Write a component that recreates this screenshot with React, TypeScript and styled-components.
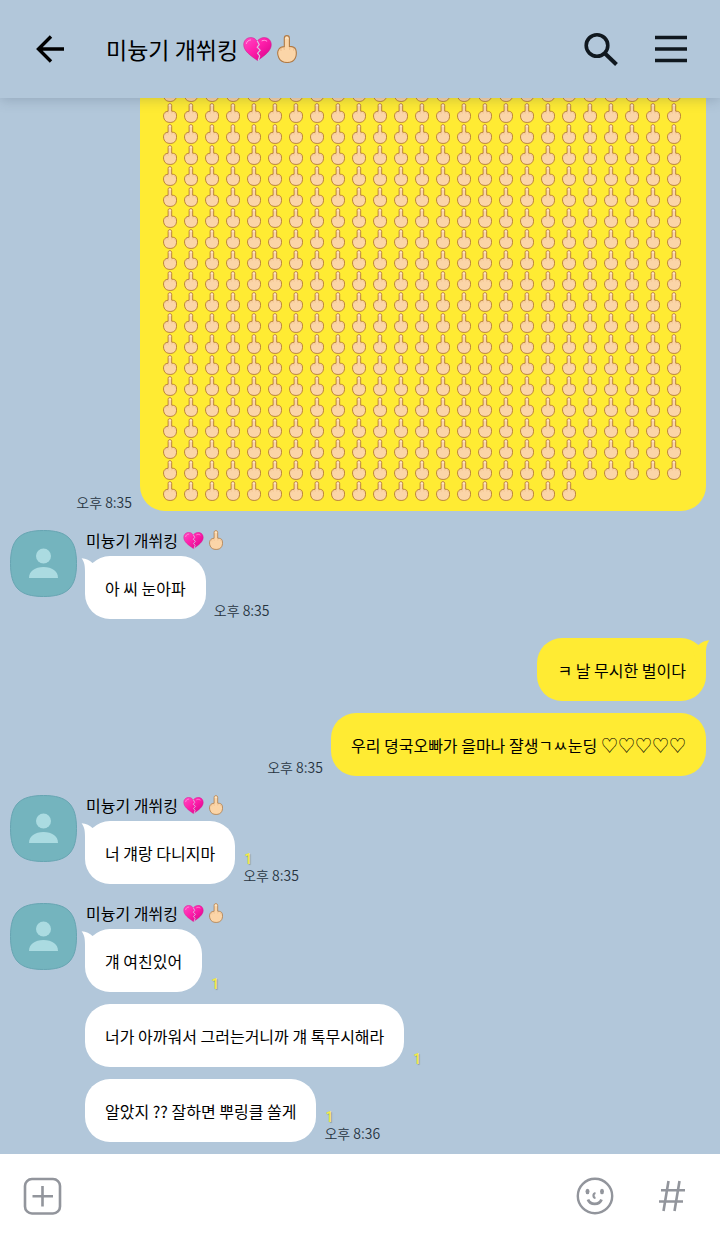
import React from "react";
import styled, { createGlobalStyle } from "styled-components";

const GlobalStyle = createGlobalStyle`
  * { box-sizing: border-box; }
  body {
    margin: 0;
    background: #b2c7da;
    color: #000;
    font-family: "Noto Sans CJK KR", "Noto Sans", sans-serif;
  }
  button {
    display: flex;
    padding: 0;
    border: 0;
    background: none;
    color: inherit;
    cursor: pointer;
  }
`;

const Screen = styled.div`
  display: flex;
  flex-direction: column;
  height: 100vh;
`;

const Header = styled.header`
  position: relative;
  z-index: 1;
  display: flex;
  flex: none;
  align-items: center;
  height: 98px;
  padding: 0 32px 0 36px;
  background: #b2c7da;
  box-shadow: 0 2px 12px rgba(40, 60, 80, 0.22);
`;

const Title = styled.h1`
  display: flex;
  flex: 1;
  align-items: center;
  gap: 5px;
  margin: 0 0 0 41px;
  font-size: 23px;
  font-weight: 400;
  line-height: 32px;
`;

const Tools = styled.div`
  display: flex;
  align-items: center;
  gap: 36px;
  color: #10181f;
`;

const Chat = styled.main`
  display: flex;
  flex: 1;
  flex-direction: column;
  justify-content: flex-end;
  gap: 19px;
  min-height: 0;
  padding: 0 14px 12px 10px;
  overflow: hidden;
`;

const Group = styled.section`
  display: flex;
  flex: none;
  gap: 8px;
`;

const Stack = styled.div<{ $mine?: boolean }>`
  display: flex;
  flex: 1;
  flex-direction: column;
  align-items: ${(p) => (p.$mine ? "flex-end" : "flex-start")};
  gap: 12px;
`;

const Sender = styled.div`
  display: flex;
  align-items: center;
  gap: 5px;
  height: 20px;
  margin-bottom: -6px;
  padding-left: 1px;
  font-size: 16px;
  line-height: 20px;
`;

const Row = styled.div<{ $mine?: boolean }>`
  display: flex;
  flex-direction: ${(p) => (p.$mine ? "row-reverse" : "row")};
  align-items: flex-end;
  gap: 8px;
`;

const Bubble = styled.div<{ $mine?: boolean }>`
  position: relative;
  max-width: 566px;
  padding: 21px 20px 19px;
  border-radius: 25px;
  background: ${(p) => (p.$mine ? "#ffeb33" : "#fff")};
  font-size: 16px;
  line-height: 23px;
`;

const HandBubble = styled(Bubble)`
  display: flex;
  flex-wrap: wrap;
  padding: 10px 20px 10px 19px;
`;

const HandCell = styled.span`
  display: flex;
  align-items: center;
  justify-content: center;
  width: 21px;
  height: 21px;
`;

const Hearts = styled.span`
  font-size: 17px;
  font-weight: 300;
  line-height: 17px;
`;

const Tail = styled.svg<{ $mine?: boolean }>`
  position: absolute;
  top: 1px;
  ${(p) => (p.$mine ? "right: -4px; transform: scaleX(-1);" : "left: -4px;")}
`;

const Meta = styled.div`
  display: flex;
  flex-direction: column;
  font-size: 14px;
  font-weight: 350;
  line-height: 17px;
  color: #27343f;
`;

const Unread = styled.span`
  padding-left: 1px;
  font-family: Roboto, sans-serif;
  font-weight: 500;
  line-height: 16px;
  color: #f6ea45;
  text-shadow: 1px 1px 1px rgba(90, 100, 70, 0.4);
`;

const Time = styled.time`
  line-height: 17px;
`;

const Composer = styled.form`
  display: flex;
  flex: none;
  align-items: center;
  height: 84px;
  padding: 0 34px 0 23px;
  background: #fff;
  color: #92959c;
`;

const MessageInput = styled.input`
  flex: 1;
  min-width: 0;
  height: 40px;
  margin: 0 16px;
  border: 0;
  outline: 0;
  background: transparent;
  font: inherit;
`;

const ComposerTools = styled.div`
  display: flex;
  align-items: center;
  gap: 44px;
`;

const Hand = ({ width, height, outline = "#b07a45" }: { width: number; height: number; outline?: string }) => (
  <svg width={width} height={height} viewBox="0 0 20 28" aria-hidden="true">
    <path
      d="M7.3 11.6V3.2C7.3 1.5 8.5.6 9.9.6s2.5.9 2.5 2.6v8.2c3.4.1 5.6.8 6.4 3.2.8 3 .7 6.1-.6 8.7-1.4 2.7-4.3 4.2-8 4.2-4.4 0-7.1-1.8-8.4-4.8C.4 19.7.4 16.4 1.8 14.3 3 12.4 5 11.6 7.3 11.6z"
      fill="#fbd5a8"
      stroke={outline}
      strokeWidth="1.1"
    />
    <path d="M8.8 4.2c0-2.6 2.2-2.6 2.2 0" fill="none" stroke="#fff0d8" strokeWidth="1" />
    <path
      d="M4.3 16c-.9-1-.4-2.3.6-2.9M7.5 12.5c-.5.8-.4 1.7 0 2.4M12.3 12.2c.6.8.6 1.7.2 2.4M16.2 13.2c.6.7.7 1.5.3 2.3"
      fill="none"
      stroke="#e6b07f"
      strokeWidth="0.7"
    />
  </svg>
);

const BrokenHeart = ({ width, height }: { width: number; height: number }) => (
  <svg width={width} height={height} viewBox="0 0 29 24" aria-hidden="true">
    <defs>
      <linearGradient id="pinkHeart" x1="0" y1="0" x2="1" y2="1">
        <stop offset="0" stopColor="#ff4cc4" />
        <stop offset="0.45" stopColor="#ff1fab" />
        <stop offset="1" stopColor="#d60087" />
      </linearGradient>
    </defs>
    <path
      d="M14 4.2C12.5 1.7 10.4.5 7.8.5 3.7.5.7 3.6.7 7.7c0 6 6.4 10.8 13.8 15.8 7.4-5 13.8-9.8 13.8-15.8 0-4.1-3-7.2-7.1-7.2-2.7 0-5 1.3-7.2 3.7z"
      fill="url(#pinkHeart)"
      stroke="#ca168c"
      strokeWidth="0.5"
    />
    <path
      d="M14.2 3.8l2 3.8-2 2.6 3 3-2.6 3 2.1 2.8-1.5 4.5"
      fill="none"
      stroke="#d3c8e2"
      strokeWidth="1.2"
    />
    <path
      d="M3.4 6.5c.5-2 2-3.3 4.1-3.5M19 3.8c1.6-.8 3.4-.7 4.8.3"
      fill="none"
      stroke="#ff9ee0"
      strokeWidth="1"
      strokeLinecap="round"
    />
  </svg>
);

const Avatar = () => (
  <svg width="67" height="67" viewBox="0 0 67 67" role="img" aria-label="프로필">
    <path
      d="M33.5.5C57.5.5 66.5 9.5 66.5 33.5S57.5 66.5 33.5 66.5.5 57.5.5 33.5 9.5.5 33.5.5z"
      fill="#74b4be"
      stroke="#67a5b2"
    />
    <circle cx="33.5" cy="26" r="7.5" fill="#abdbe1" />
    <path d="M19 48c0-7 6-11 14.5-11S48 41 48 48z" fill="#abdbe1" />
  </svg>
);

const BubbleTail = ({ mine }: { mine?: boolean }) => (
  <Tail $mine={mine} width="20" height="24" viewBox="0 0 20 24" aria-hidden="true">
    <path
      d="M.6 1.2C5 1.5 9 3.5 11.5 6L19 5 14 22 4 24V15C4 9 3.5 5 .6 1.2z"
      fill={mine ? "#ffeb33" : "#fff"}
    />
  </Tail>
);

const SenderName = () => (
  <Sender>
    미늉기 개쒸킹
    <BrokenHeart width={21} height={17} />
    <Hand width={14} height={20} />
  </Sender>
);

type MessageProps = {
  text: string;
  hearts?: string;
  mine?: boolean;
  tail?: boolean;
  unread?: boolean;
  time?: string;
};

const Message = ({ text, hearts, mine, tail, unread, time }: MessageProps) => (
  <Row $mine={mine}>
    <Bubble $mine={mine}>
      {tail && <BubbleTail mine={mine} />}
      {text}
      {hearts && <Hearts> {hearts}</Hearts>}
    </Bubble>
    {(unread || time) && (
      <Meta>
        {unread && <Unread>1</Unread>}
        {time && <Time>{time}</Time>}
      </Meta>
    )}
  </Row>
);

const FriendGroup = ({ messages }: { messages: MessageProps[] }) => (
  <Group>
    <Avatar />
    <Stack>
      <SenderName />
      {messages.map((message, i) => (
        <Message key={message.text} {...message} tail={i === 0} />
      ))}
    </Stack>
  </Group>
);

const HAND_COUNT = 25 * 19 + 20;

export default function App() {
  return (
    <Screen>
      <GlobalStyle />
      <Header>
        <button type="button" aria-label="뒤로">
          <svg width="29" height="28" viewBox="0 0 29 28" fill="none" stroke="#000" strokeWidth="3.4">
            <path d="M15 1.5L2.5 14 15 26.5M2.5 14H28" />
          </svg>
        </button>
        <Title>
          미늉기 개쒸킹
          <BrokenHeart width={29} height={24} />
          <Hand width={20} height={28} />
        </Title>
        <Tools>
          <button type="button" aria-label="검색">
            <svg width="35" height="34" viewBox="0 0 35 34" fill="none" stroke="currentColor" strokeWidth="3.6">
              <circle cx="13" cy="13.5" r="10.8" />
              <path d="M20.5 21L32.5 32.5" strokeWidth="4" />
            </svg>
          </button>
          <button type="button" aria-label="메뉴">
            <svg width="33" height="28" viewBox="0 0 33 28" stroke="currentColor" strokeWidth="3.4">
              <path d="M0 2.5H32M0 14H32M0 25.5H32" />
            </svg>
          </button>
        </Tools>
      </Header>

      <Chat>
        <Group>
          <Stack $mine>
            <Row $mine>
              <HandBubble $mine>
                {Array.from({ length: HAND_COUNT }, (_, i) => (
                  <HandCell key={i}>
                    <Hand width={14} height={20} outline="#a8682c" />
                  </HandCell>
                ))}
              </HandBubble>
              <Meta>
                <Time>오후 8:35</Time>
              </Meta>
            </Row>
          </Stack>
        </Group>

        <FriendGroup messages={[{ text: "아 씨 눈아파", time: "오후 8:35" }]} />

        <Group>
          <Stack $mine>
            <Message mine tail text="ㅋ 날 무시한 벌이다" />
            <Message mine text="우리 뎡국오빠가 을마나 쟐생ㄱㅆ눈딩" hearts="♡♡♡♡♡" time="오후 8:35" />
          </Stack>
        </Group>

        <FriendGroup messages={[{ text: "너 걔랑 다니지마", unread: true, time: "오후 8:35" }]} />

        <FriendGroup
          messages={[
            { text: "걔 여친있어", unread: true },
            { text: "너가 아까워서 그러는거니까 걔 톡무시해라", unread: true },
            { text: "알았지 ?? 잘하면 뿌링클 쏠게", unread: true, time: "오후 8:36" },
          ]}
        />
      </Chat>

      <Composer onSubmit={(e) => e.preventDefault()}>
        <button type="button" aria-label="추가">
          <svg width="39" height="38" viewBox="0 0 39 38" fill="none" stroke="currentColor" strokeWidth="2.6">
            <rect x="2" y="2" width="35" height="34.5" rx="7" />
            <path d="M9.5 19.2H30M19.5 9V29.5" />
          </svg>
        </button>
        <MessageInput type="text" aria-label="메시지 입력" />
        <ComposerTools>
          <button type="button" aria-label="이모티콘">
            <svg width="38" height="38" viewBox="0 0 38 38" fill="none" stroke="currentColor" strokeWidth="2.4">
              <circle cx="19" cy="19" r="17.2" />
              <ellipse cx="11.5" cy="14.5" rx="2" ry="2.7" fill="currentColor" stroke="none" />
              <ellipse cx="26" cy="14.5" rx="2" ry="2.7" fill="currentColor" stroke="none" />
              <path d="M19.5 16C16.8 16.5 16.8 20.8 19.5 21" strokeWidth="2.2" />
              <path d="M12 22.5C14 28.3 23.5 28.3 25.5 22.5" strokeWidth="2.8" />
            </svg>
          </button>
          <button type="button" aria-label="샵검색">
            <svg width="28" height="32" viewBox="0 0 28 32" fill="none" stroke="currentColor" strokeWidth="2.6">
              <path d="M10.5 1L5.5 31M21.5 1L16.5 31M3 10.2H27M1 21.5H25" />
            </svg>
          </button>
        </ComposerTools>
      </Composer>
    </Screen>
  );
}
